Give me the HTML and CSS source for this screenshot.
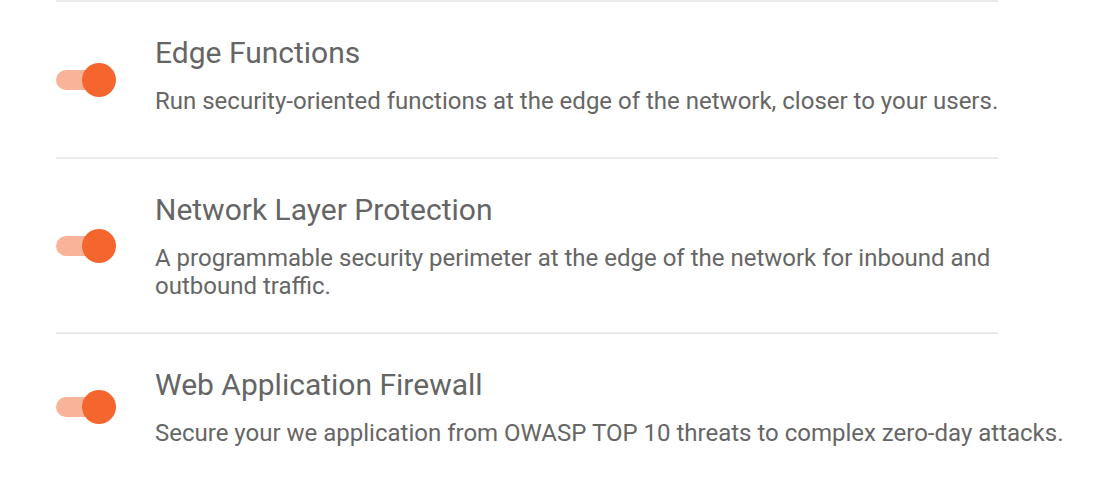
FILE: index.html
```html
<!DOCTYPE html>
<html>
<head>
  <title>Security Features</title>
  <link rel="stylesheet" href="styles.css">
</head>
<body>
  <ul class="features">
    <li class="feature">
      <span class="toggle on"><span class="knob"></span></span>
      <div class="feature-text">
        <h3>Edge Functions</h3>
        <p>Run security-oriented functions at the edge of the network, closer to your users.</p>
      </div>
    </li>
    <li class="feature">
      <span class="toggle on"><span class="knob"></span></span>
      <div class="feature-text">
        <h3>Network Layer Protection</h3>
        <p>A programmable security perimeter at the edge of the network for inbound and outbound traffic.</p>
      </div>
    </li>
    <li class="feature">
      <span class="toggle on"><span class="knob"></span></span>
      <div class="feature-text">
        <h3>Web Application Firewall</h3>
        <p>Secure your we application from OWASP TOP 10 threats to complex zero-day attacks.</p>
      </div>
    </li>
  </ul>
</body>
</html>
```

FILE: styles.css
```css
body {
  font-family: Roboto, "Liberation Sans", sans-serif;
  background-color: #fff;
  margin: 0;
  padding: 0;
}

.features {
  list-style: none;
  margin: 0 0 0 56px;
  padding: 0;
  width: 942px;
}

.feature {
  display: flex;
  align-items: center;
  min-height: 155px;
  border-top: 2px solid #e9e9e9;
}

.feature:last-child {
  min-height: 0;
}

.toggle {
  position: relative;
  flex-shrink: 0;
  width: 60px;
  height: 34px;
  margin-right: 39px;
}

.toggle::before {
  content: "";
  position: absolute;
  left: 0;
  top: 7px;
  width: 52px;
  height: 20px;
  border-radius: 10px;
  background-color: #f9b398;
}

.toggle .knob {
  position: absolute;
  right: 0;
  top: 0;
  width: 34px;
  height: 34px;
  border-radius: 50%;
  background-color: #f4662e;
}

.feature-text {
  align-self: flex-start;
  flex-shrink: 0;
  width: 920px;
  padding: 33px 0 32px;
}

.feature-text h3 {
  margin: 0 0 16px;
  font-size: 30px;
  font-weight: 400;
  line-height: 36px;
  color: #656565;
}

.feature-text p {
  margin: 0;
  font-size: 24px;
  line-height: 28px;
  color: #666;
}
```
